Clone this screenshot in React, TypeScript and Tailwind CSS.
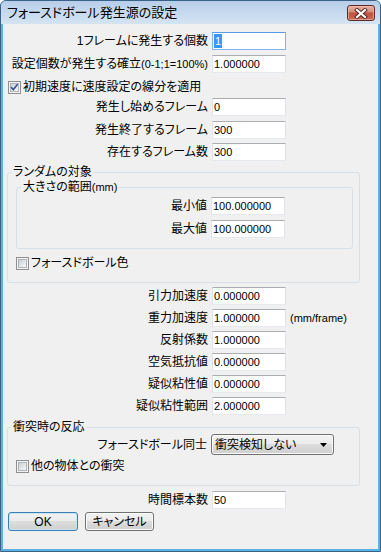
import React from "react";

const FONT =
  "[font-family:'Liberation_Sans','Noto_Sans_CJK_JP',sans-serif] [font-feature-settings:'palt']";

function TextBox({ value, selected }: { value: string; selected?: boolean }) {
  return (
    <div
      className={`w-[74px] h-[18px] shrink-0 flex items-center bg-white border pl-[1px] text-[11px] leading-[14px] text-black ${
        selected
          ? "border-[#7eb4ea] border-t-[#569de5]"
          : "border-[#e2e3ea] border-t-[#abadb3] border-b-[#e3e9ef]"
      }`}
    >
      {selected ? (
        <span className="bg-[#3399ff] text-white px-[1px]">{value}</span>
      ) : (
        <span>{value}</span>
      )}
    </div>
  );
}

function Row({
  label,
  value,
  lw,
  className = "",
  selected,
  extra,
}: {
  label: React.ReactNode;
  value: string;
  lw: string;
  className?: string;
  selected?: boolean;
  extra?: React.ReactNode;
}) {
  return (
    <div className={`flex items-center h-[18px] ${className}`}>
      <div className={`${lw} shrink-0 flex justify-end whitespace-nowrap leading-[14px]`}>{label}</div>
      <div className="ml-[4px]">
        <TextBox value={value} selected={selected} />
      </div>
      {extra}
    </div>
  );
}

function CheckBox({ checked }: { checked?: boolean }) {
  return (
    <div className="relative w-[13px] h-[13px] shrink-0 border border-[#8f8f8f] bg-[#f4f4f4] p-[1px]">
      <div className="w-full h-full border border-[#aeb3b9] bg-gradient-to-br from-[#cbcfd5] to-[#f8f8f8]" />
      {checked && (
        <svg className="absolute left-[-1px] top-[-1px]" width="13" height="13" viewBox="0 0 13 13">
          <path d="M3 6.5 L5.3 9 L10 3" fill="none" stroke="#ffffff" strokeWidth="2.6" strokeOpacity="0.6" />
          <path d="M3 6.2 L5.3 8.6 L9.8 3" fill="none" stroke="#3d5595" strokeWidth="1.7" />
        </svg>
      )}
    </div>
  );
}

function CheckRow({ label, checked, className = "" }: { label: string; checked?: boolean; className?: string }) {
  return (
    <div className={`flex items-center h-[18px] ${className}`}>
      <CheckBox checked={checked} />
      <span className="ml-[2px] leading-[14px] whitespace-nowrap">{label}</span>
    </div>
  );
}

function Button({ children, isDefault }: { children: React.ReactNode; isDefault?: boolean }) {
  return (
    <div
      className={`h-[19px] rounded-[3px] border flex items-center justify-center leading-[14px] bg-[linear-gradient(#f2f2f2,#ebebeb_50%,#dddddd_50%,#cfcfcf)] ${
        isDefault
          ? "w-[70px] border-[#3c7fb1] shadow-[inset_0_0_0_1px_#c4e5f6]"
          : "w-[69px] border-[#707070] shadow-[inset_0_0_0_1px_#fcfcfc]"
      }`}
    >
      {children}
    </div>
  );
}

export default function App() {
  return (
    <div
      className={`${FONT} text-[12px] text-black w-[381px] h-[552px] flex flex-col overflow-hidden rounded-t-[6px] border border-[#3a6288] bg-[#5cb2e2]`}
    >
      {/* title bar */}
      <div className="h-[23px] shrink-0 flex items-start justify-between pl-[6px] pr-[5px] pt-[4px] bg-gradient-to-b from-[#b7cee9] to-[#d5e4f3]">
        <span className="text-[13px] leading-[16px] whitespace-nowrap">フォースドボール発生源の設定</span>
        <div className="w-[28px] h-[16px] rounded-[3px] border border-[#5e2a22] bg-[linear-gradient(#eab0a2,#d98b79_42%,#c4503d_50%,#cb6a55)] shadow-[inset_0_0_0_1px_#f2c2b6a0] flex items-center justify-center">
          <svg width="14" height="11" viewBox="0 0 14 11">
            <path d="M3 2 L11 9 M11 2 L3 9" stroke="#4a2b28" strokeWidth="4" strokeLinecap="square" />
            <path d="M3 2 L11 9 M11 2 L3 9" stroke="#ffffff" strokeWidth="2.2" strokeLinecap="square" />
          </svg>
        </div>
      </div>

      {/* body */}
      <div className="flex-1 flex px-[2px] pb-[2px]">
        <div className="flex-1 bg-[#f0f0f0] flex flex-col pl-[4px]">
          <Row className="mt-[8px]" lw="w-[201px]" label="1フレームに発生する個数" value="1" selected />
          <Row
            className="mt-[5px]"
            lw="w-[201px]"
            label={
              <span>
                設定個数が発生する確立<span className="text-[11px]">(0-1;1=100%)</span>
              </span>
            }
            value="1.000000"
          />
          <CheckRow className="mt-[5px] ml-[1px]" checked label="初期速度に速度設定の線分を適用" />
          <Row className="mt-[2px]" lw="w-[201px]" label="発生し始めるフレーム" value="0" />
          <Row className="mt-[5px]" lw="w-[201px]" label="発生終了するフレーム" value="300" />
          <Row className="mt-[4px]" lw="w-[201px]" label="存在するフレーム数" value="300" />

          {/* random group */}
          <fieldset className="mt-[4px] w-[353px] border border-[#d5dfe5] rounded-[3px] pb-[10px]">
            <legend className="ml-[3px] px-[2px] leading-[14px]">ランダムの対象</legend>
            <fieldset className="mt-[1px] ml-[8px] w-[337px] border border-[#d5dfe5] rounded-[3px] pb-[10px]">
              <legend className="ml-[4px] px-[2px] leading-[14px]">
                大きさの範囲<span className="text-[11px]">(mm)</span>
              </legend>
              <Row className="mt-[3px]" lw="w-[190px]" label="最小値" value="100.000000" />
              <Row className="mt-[5px]" lw="w-[190px]" label="最大値" value="100.000000" />
            </fieldset>
            <CheckRow className="mt-[5px] ml-[8px]" label="フォースドボール色" />
          </fieldset>

          <Row className="mt-[4px]" lw="w-[201px]" label="引力加速度" value="0.000000" />
          <Row
            className="mt-[4px]"
            lw="w-[201px]"
            label="重力加速度"
            value="1.000000"
            extra={<span className="ml-[4px] text-[11px] leading-[14px]">(mm/frame)</span>}
          />
          <Row className="mt-[4px]" lw="w-[201px]" label="反射係数" value="1.000000" />
          <Row className="mt-[4px]" lw="w-[201px]" label="空気抵抗値" value="0.000000" />
          <Row className="mt-[4px]" lw="w-[201px]" label="疑似粘性値" value="0.000000" />
          <Row className="mt-[4px]" lw="w-[201px]" label="疑似粘性範囲" value="2.000000" />

          {/* collision group */}
          <fieldset className="mt-[5px] w-[353px] border border-[#d5dfe5] rounded-[3px] pb-[10px]">
            <legend className="ml-[3px] px-[2px] leading-[14px]">衝突時の反応</legend>
            <div className="flex items-center h-[21px]">
              <div className="w-[199px] shrink-0 flex justify-end whitespace-nowrap leading-[14px]">フォースドボール同士</div>
              <div className="ml-[4px] w-[123px] h-[21px] rounded-[3px] border border-[#707070] bg-[linear-gradient(#f2f2f2,#ebebeb_50%,#dddddd_50%,#cfcfcf)] shadow-[inset_0_0_0_1px_#fbfbfb] flex items-center justify-between pl-[3px] pr-[6px]">
                <span className="leading-[14px] whitespace-nowrap">衝突検知しない</span>
                <svg width="7" height="4" viewBox="0 0 7 4">
                  <path d="M0 0 H7 L3.5 4 Z" fill="#000000" />
                </svg>
              </div>
            </div>
            <CheckRow className="mt-[2px] ml-[8px]" label="他の物体との衝突" />
          </fieldset>

          <Row className="mt-[5px]" lw="w-[201px]" label="時間標本数" value="50" />

          <div className="mt-[3px] ml-[1px] flex gap-[7px]">
            <Button isDefault>OK</Button>
            <Button>キャンセル</Button>
          </div>
        </div>
      </div>
    </div>
  );
}
